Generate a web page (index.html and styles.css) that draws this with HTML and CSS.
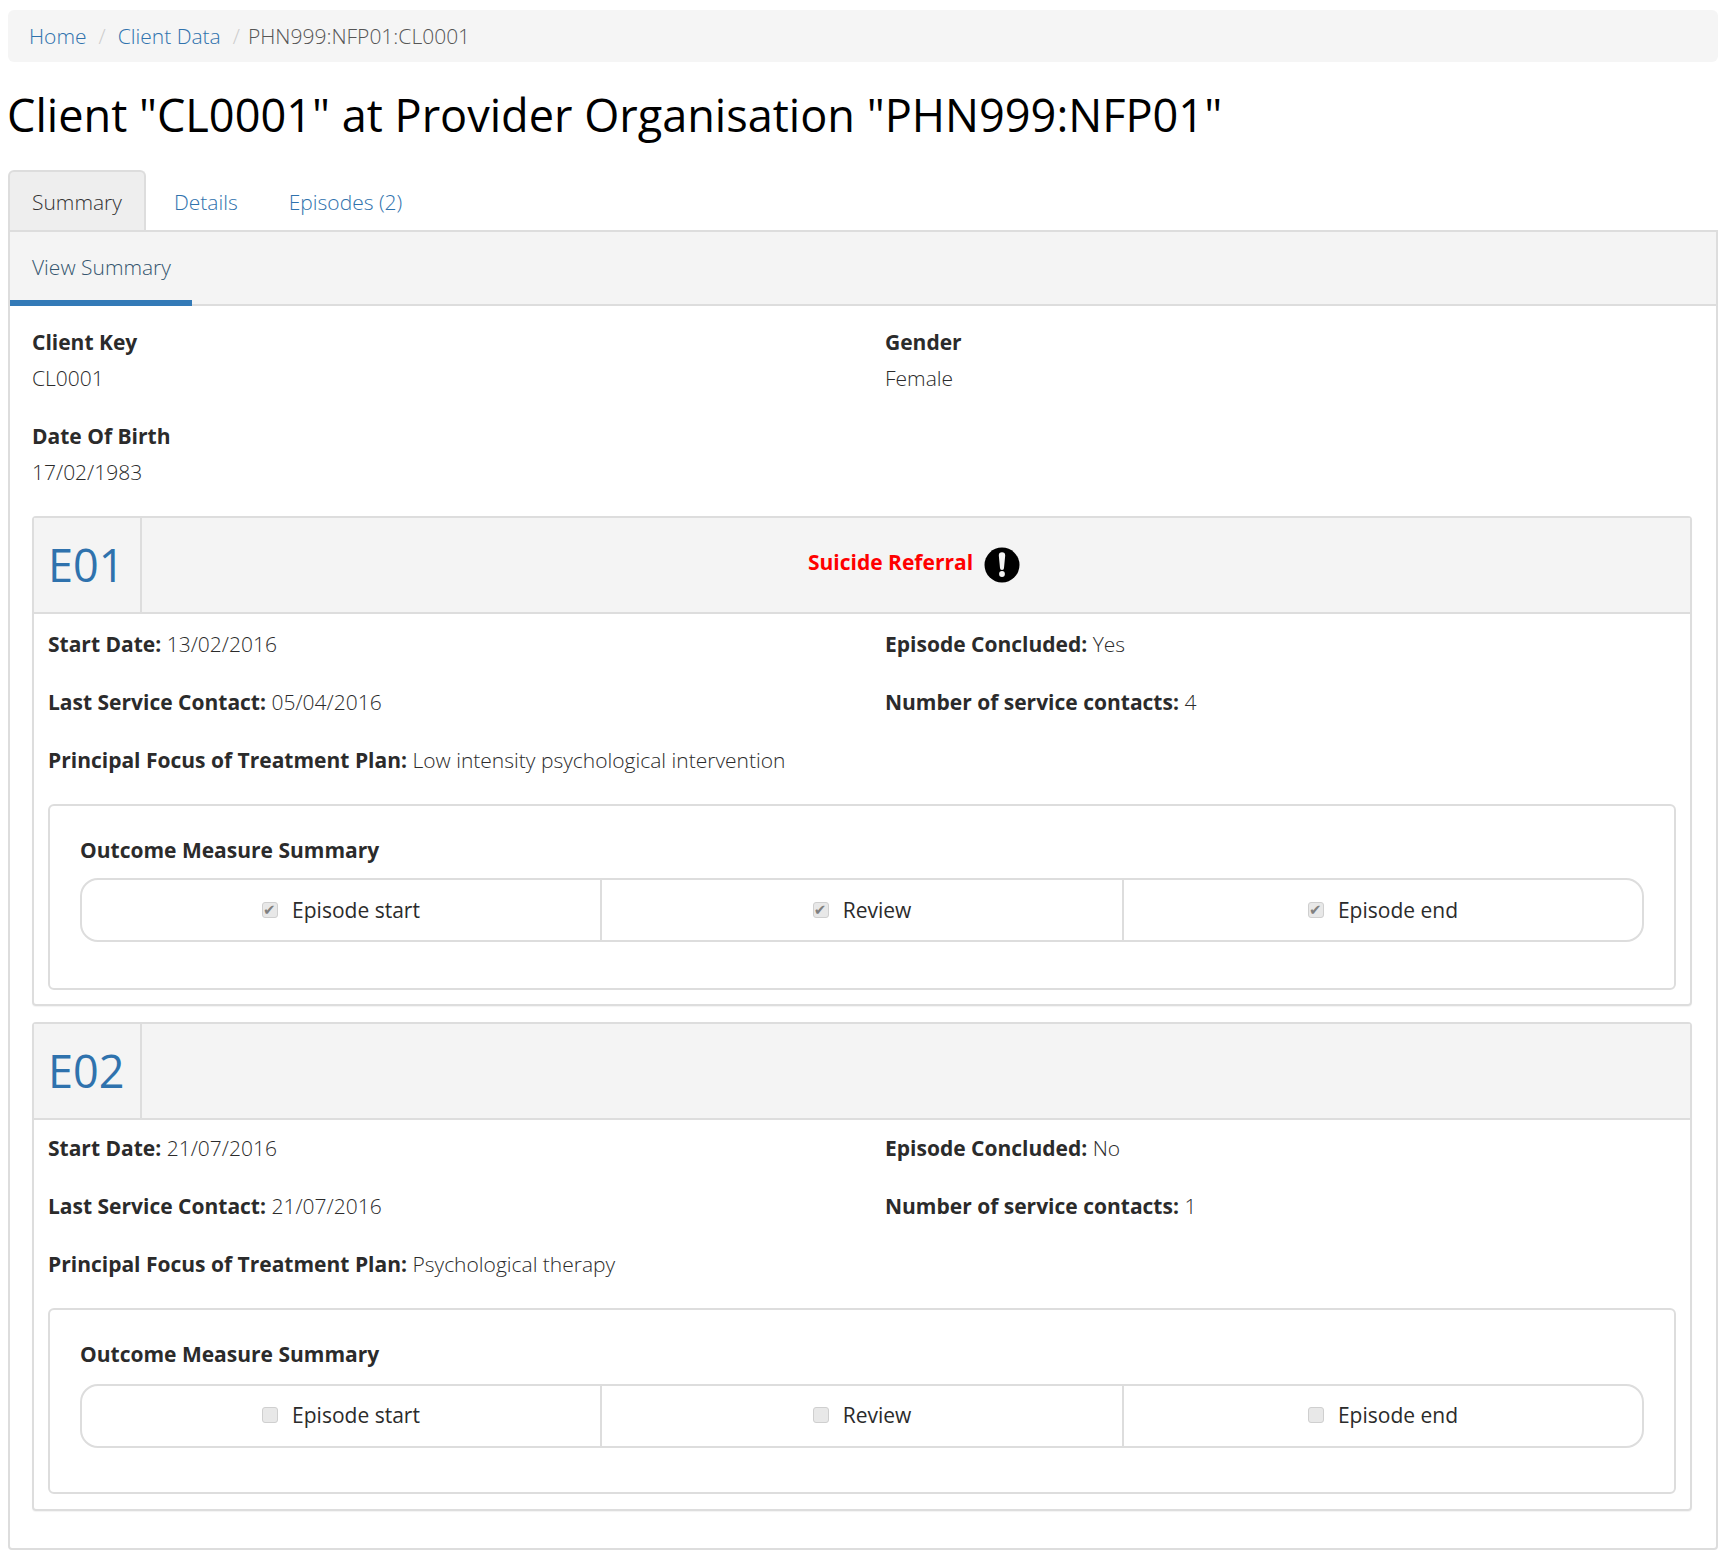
FILE: index.html

```html
<!DOCTYPE html>
<html>
<head>
    <meta charset="UTF-8">
    <title>Client CL0001</title>
    <link rel="stylesheet" href="styles.css">
</head>
<body>
    <ol class="breadcrumb">
        <li><a href="#">Home</a></li>
        <li class="sep">/</li>
        <li><a href="#">Client Data</a></li>
        <li class="sep">/</li>
        <li class="current">PHN999:NFP01:CL0001</li>
    </ol>

    <h1>Client "CL0001" at Provider Organisation "PHN999:NFP01"</h1>

    <div class="tabs">
        <a class="tab active" href="#">Summary</a>
        <a class="tab" href="#">Details</a>
        <a class="tab" href="#">Episodes (2)</a>
    </div>

    <div class="tab-content">
        <div class="subnav"><a class="subnav-item" href="#">View Summary</a></div>

        <div class="client-fields">
            <div class="field"><strong>Client Key</strong><span>CL0001</span></div>
            <div class="field"><strong>Gender</strong><span>Female</span></div>
            <div class="field"><strong>Date Of Birth</strong><span>17/02/1983</span></div>
        </div>

        <div class="episode">
            <div class="episode-head">
                <a class="episode-key" href="#">E01</a>
                <div class="episode-flag">
                    <span class="flag-text">Suicide Referral</span>
                    <svg class="flag-icon" viewBox="0 0 36 36" width="36" height="36">
                        <circle cx="18" cy="18" r="17.5" fill="#000"/>
                        <path d="M14.8 8.5a3.2 3.2 0 0 1 6.4 0L20 21a2 2 0 0 1-4 0z" fill="#f4f4f4"/>
                        <circle cx="18" cy="27" r="2.9" fill="#f4f4f4"/>
                    </svg>
                </div>
            </div>
            <div class="episode-body">
                <div class="info-grid">
                    <p><strong>Start Date:</strong> 13/02/2016</p>
                    <p><strong>Episode Concluded:</strong> Yes</p>
                    <p><strong>Last Service Contact:</strong> 05/04/2016</p>
                    <p><strong>Number of service contacts:</strong> 4</p>
                    <p class="wide"><strong>Principal Focus of Treatment Plan:</strong> Low intensity psychological intervention</p>
                </div>
                <div class="outcome">
                    <h4>Outcome Measure Summary</h4>
                    <div class="stages">
                        <label class="stage"><input type="checkbox" checked disabled> Episode start</label>
                        <label class="stage"><input type="checkbox" checked disabled> Review</label>
                        <label class="stage"><input type="checkbox" checked disabled> Episode end</label>
                    </div>
                </div>
            </div>
        </div>

        <div class="episode">
            <div class="episode-head">
                <a class="episode-key" href="#">E02</a>
            </div>
            <div class="episode-body">
                <div class="info-grid">
                    <p><strong>Start Date:</strong> 21/07/2016</p>
                    <p><strong>Episode Concluded:</strong> No</p>
                    <p><strong>Last Service Contact:</strong> 21/07/2016</p>
                    <p><strong>Number of service contacts:</strong> 1</p>
                    <p class="wide"><strong>Principal Focus of Treatment Plan:</strong> Psychological therapy</p>
                </div>
                <div class="outcome">
                    <h4>Outcome Measure Summary</h4>
                    <div class="stages">
                        <label class="stage"><input type="checkbox" disabled> Episode start</label>
                        <label class="stage"><input type="checkbox" disabled> Review</label>
                        <label class="stage"><input type="checkbox" disabled> Episode end</label>
                    </div>
                </div>
            </div>
        </div>
    </div>
</body>
</html>
```

FILE: styles.css

```css
* {
    box-sizing: border-box;
    margin: 0;
    padding: 0;
}
body {
    font-family: "Open Sans", "Liberation Sans", sans-serif;
    font-size: 21px;
    font-weight: 300;
    color: #2b2b2b;
    background: #fff;
    padding: 10px 6px 0 8px;
}
a {
    color: #2f72ad;
    text-decoration: none;
}
strong {
    font-weight: 700;
}
.breadcrumb {
    display: flex;
    align-items: center;
    list-style: none;
    height: 52px;
    padding: 0 22px 0 21px;
    gap: 12px;
    background: #f5f5f5;
    border-radius: 6px;
}
.breadcrumb .sep {
    color: #ccc;
}
.breadcrumb .current {
    color: #555;
    margin-left: -4px;
}
h1 {
    font-size: 45.1px;
    font-weight: 400;
    line-height: 62px;
    color: #000;
    margin: 22px 0 24px -1px;
}
.tabs {
    display: flex;
    height: 60px;
    padding-left: 1px;
}
.tab {
    display: flex;
    align-items: center;
    padding: 4px 22px 0;
    margin-right: 7px;
}
.tab.active {
    color: #333;
    background: #eee;
    border: 2px solid #ddd;
    border-bottom: none;
    border-radius: 6px 6px 0 0;
    margin-left: -1px;
    margin-right: 6px;
    padding-top: 2px;
}
.tab-content {
    height: 1320px;
    border: 2px solid #ddd;
    border-radius: 0 0 4px 4px;
}
.subnav {
    height: 74px;
    background: #f4f4f4;
    border-bottom: 2px solid #ddd;
}
.subnav-item {
    display: flex;
    align-items: center;
    width: 182px;
    height: 74px;
    padding: 2px 0 0 22px;
    color: #35566f;
    white-space: nowrap;
    border-bottom: 6px solid #337ab7;
}
.client-fields {
    display: grid;
    grid-template-columns: 853px 1fr;
    padding: 20px 22px 0;
    row-gap: 26px;
}
.field strong {
    display: block;
    line-height: 32px;
}
.field span {
    display: block;
    line-height: 32px;
    margin-top: 4px;
}
.episode {
    margin: 0 24px 16px 22px;
    border: 2px solid #ddd;
    border-radius: 4px;
    box-shadow: 0 1px 1px rgba(0,0,0,0.05);
}
.client-fields + .episode {
    margin-top: 28px;
}
.episode-head {
    display: flex;
    height: 96px;
    background: #f4f4f4;
    border-bottom: 2px solid #ddd;
}
.episode-key {
    width: 108px;
    flex: none;
    padding-left: 14px;
    font-size: 45px;
    font-weight: 400;
    line-height: 94px;
    border-right: 2px solid #ddd;
}
.episode-flag {
    flex: 1;
    display: flex;
    align-items: center;
    justify-content: center;
    gap: 11px;
    padding: 0 4px 6px 0;
}
.flag-text {
    color: #f00;
    font-weight: 700;
}
.flag-icon {
    margin-top: 6px;
}
.episode-body {
    padding: 14px;
}
.episode + .episode .episode-body {
    padding: 12px 14px 15px;
}
.info-grid {
    display: grid;
    grid-template-columns: 837px 1fr;
    row-gap: 26px;
}
.info-grid p {
    line-height: 32px;
}
.info-grid .wide {
    grid-column: 1 / -1;
}
.outcome {
    margin-top: 28px;
    height: 186px;
    padding: 28px 30px 0;
    border: 2px solid #ddd;
    border-radius: 6px;
}
.outcome h4 {
    font-size: 21px;
    font-weight: 700;
    line-height: 32px;
    margin-bottom: 12px;
}
.stages {
    display: grid;
    grid-template-columns: 518px 522px 1fr;
    height: 64px;
    border: 2px solid #ddd;
    border-radius: 18px;
}
.episode + .episode .stages {
    margin-top: 14px;
}
.episode + .episode .stage {
    padding-bottom: 3px;
}
.stage {
    display: flex;
    align-items: center;
    justify-content: center;
    gap: 14px;
    font-weight: 400;
}
.stage + .stage {
    border-left: 2px solid #ddd;
}
.stage input {
    appearance: none;
    width: 16px;
    height: 16px;
    background: #e8e8e8;
    border: 1px solid #cfcfcf;
    border-radius: 3px;
    position: relative;
}
.stage input:checked::after {
    content: "✔";
    position: absolute;
    top: -2px;
    left: 0;
    font: 15px/18px "DejaVu Sans", sans-serif;
    color: #808080;
}
```
